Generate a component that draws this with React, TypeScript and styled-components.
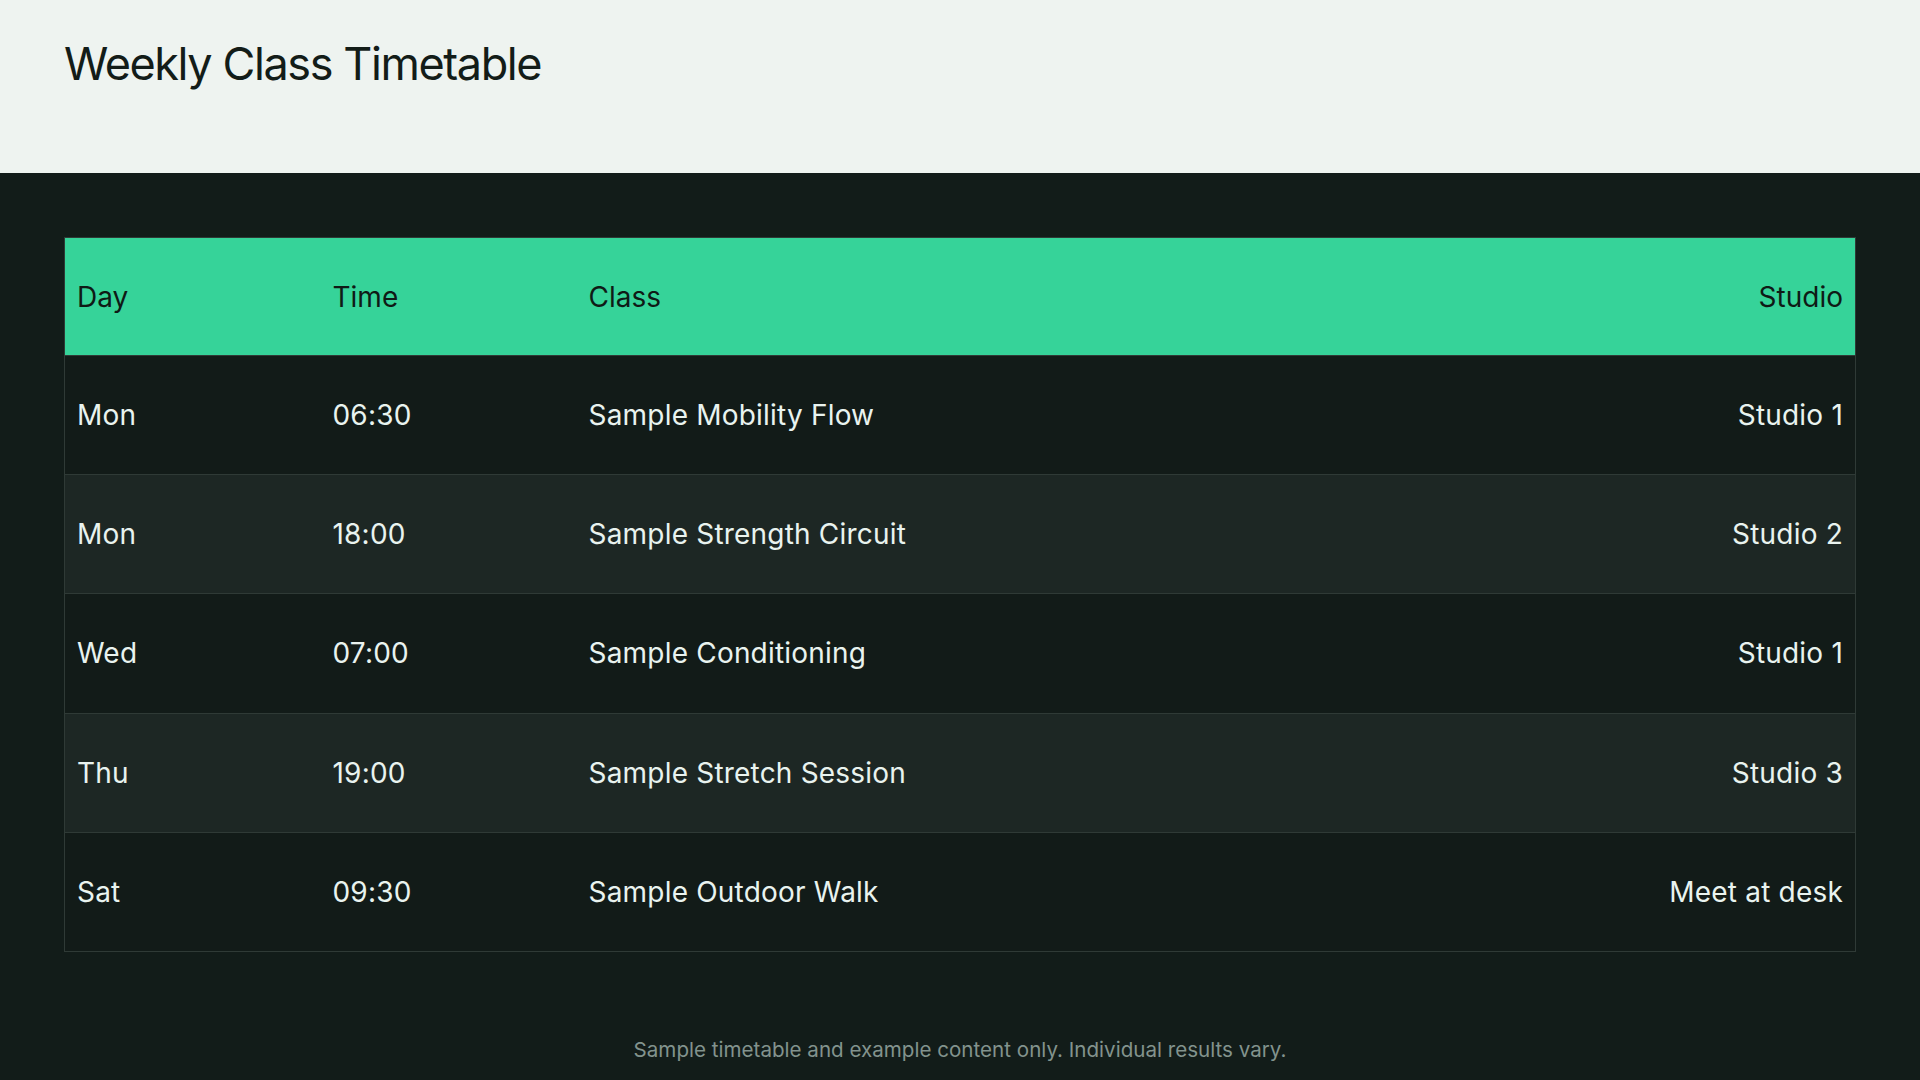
import styled, { createGlobalStyle, css } from "styled-components";

export default App;

const GlobalStyle = createGlobalStyle`
  * {
    box-sizing: border-box;
  }

  body {
    margin: 0;
    background-color: #121c19;
    font-family: Inter, "Liberation Sans", Arial, sans-serif;
  }
`;

const Header = styled.header`
  height: 173px;
  padding: 37px 64px 0;
  background-color: #eef3f0;
`;

const Title = styled.h1`
  margin: 0;
  font-size: 45px;
  line-height: 54px;
  font-weight: 400;
  letter-spacing: -1.4px;
  color: #131c18;
`;

const Main = styled.main`
  padding: 64px 64px 0;
  background-color: #121c19;
`;

const Table = styled.table`
  width: 100%;
  border-collapse: collapse;
  border: 1px solid #2f3a36;
  table-layout: fixed;
`;

const Th = styled.th<{ $align?: "left" | "right" }>`
  height: 118px;
  padding: 0 12px;
  background-color: #36d399;
  color: #0f1a16;
  font-size: 28px;
  font-weight: 400;
  text-align: ${(props) => props.$align ?? "left"};
  vertical-align: middle;
`;

const Tr = styled.tr<{ $striped: boolean }>`
  border-top: 1px solid #2f3a36;
  background-color: #121b18;

  ${(props) =>
    props.$striped &&
    css`
      background-color: #1d2724;
    `}
`;

const Td = styled.td<{ $align?: "left" | "right" }>`
  height: 119.2px;
  padding: 0 12px;
  color: #e9f3ef;
  font-size: 28px;
  letter-spacing: 0.2px;
  text-align: ${(props) => props.$align ?? "left"};
  vertical-align: middle;
`;

const Footer = styled.p`
  margin: 0;
  padding: 83px 0 20px;
  text-align: center;
  font-size: 20.6px;
  line-height: 30px;
  color: #82938d;
`;

const classes = [
  { day: "Mon", time: "06:30", name: "Sample Mobility Flow", studio: "Studio 1" },
  { day: "Mon", time: "18:00", name: "Sample Strength Circuit", studio: "Studio 2" },
  { day: "Wed", time: "07:00", name: "Sample Conditioning", studio: "Studio 1" },
  { day: "Thu", time: "19:00", name: "Sample Stretch Session", studio: "Studio 3" },
  { day: "Sat", time: "09:30", name: "Sample Outdoor Walk", studio: "Meet at desk" },
];

function App() {
  return (
    <>
      <GlobalStyle />
      <Header>
        <Title>Weekly Class Timetable</Title>
      </Header>
      <Main>
        <Table>
          <colgroup>
            <col style={{ width: 256 }} />
            <col style={{ width: 256 }} />
            <col />
            <col style={{ width: 360 }} />
          </colgroup>
          <thead>
            <tr>
              <Th>Day</Th>
              <Th>Time</Th>
              <Th>Class</Th>
              <Th $align="right">Studio</Th>
            </tr>
          </thead>
          <tbody>
            {classes.map((item, i) => (
              <Tr key={i} $striped={i % 2 === 1}>
                <Td>{item.day}</Td>
                <Td>{item.time}</Td>
                <Td>{item.name}</Td>
                <Td $align="right">{item.studio}</Td>
              </Tr>
            ))}
          </tbody>
        </Table>
        <Footer>
          Sample timetable and example content only. Individual results vary.
        </Footer>
      </Main>
    </>
  );
}
